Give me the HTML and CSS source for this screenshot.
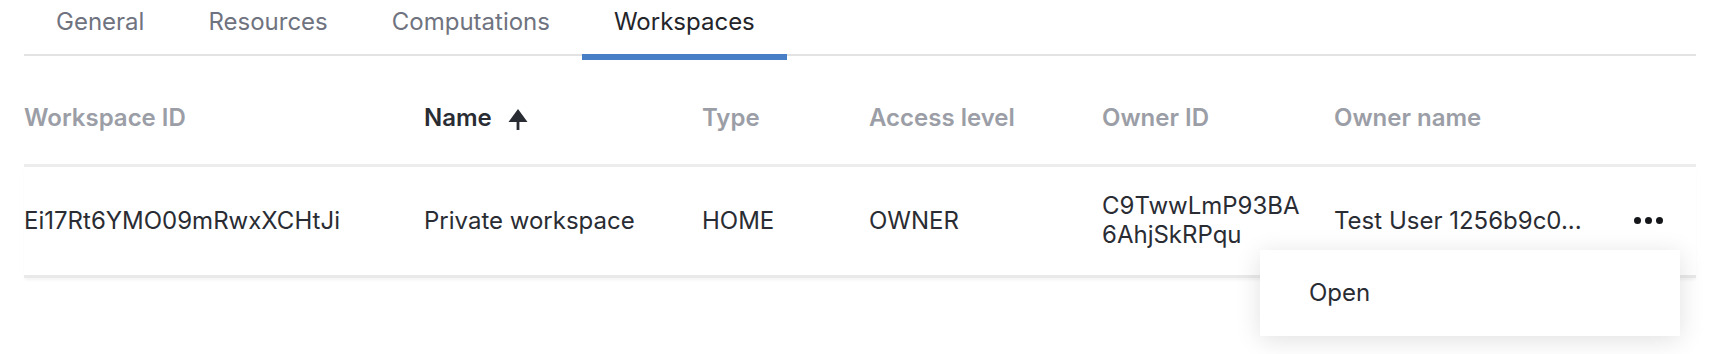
FILE: index.html
```html
<!DOCTYPE html>
<html lang="en">
<head>
    <meta charset="UTF-8">
    <meta name="viewport" content="width=device-width, initial-scale=1.0">
    <link rel="stylesheet" href="styles.css">
</head>
<body>
    <div class="page">
        <nav class="tabs">
            <a href="#" class="tab">General</a>
            <a href="#" class="tab">Resources</a>
            <a href="#" class="tab">Computations</a>
            <a href="#" class="tab active">Workspaces</a>
        </nav>

        <div class="grid">
            <div class="row head">
                <div class="cell">Workspace ID</div>
                <div class="cell sorted">Name
                    <svg class="sort-icon" viewBox="0 0 20 21" width="20" height="21">
                        <path d="M10 0 L19.5 13 L11.4 13 L11.4 21 L8.6 21 L8.6 13 L0.5 13 Z" fill="currentColor"/>
                    </svg>
                </div>
                <div class="cell">Type</div>
                <div class="cell">Access level</div>
                <div class="cell">Owner ID</div>
                <div class="cell">Owner name</div>
                <div class="cell"></div>
            </div>
            <div class="row body">
                <div class="cell">Ei17Rt6YMO09mRwxXCHtJi</div>
                <div class="cell">Private workspace</div>
                <div class="cell">HOME</div>
                <div class="cell">OWNER</div>
                <div class="cell wrap">C9TwwLmP93BA6AhjSkRPqu</div>
                <div class="cell">Test User 1256b9c0...</div>
                <div class="cell actions">
                    <button class="dots"><span></span><span></span><span></span></button>
                    <div class="menu">
                        <a href="#" class="menu-item">Open</a>
                    </div>
                </div>
            </div>
        </div>
    </div>
</body>
</html>
```

FILE: styles.css
```css
html, body {
    height: 100%;
}

body {
    margin: 0;
    min-height: 100vh;
    background: #ffffff;
    font-family: Inter, "Noto Sans", sans-serif;
    color: #2a2c33;
}

.page {
    min-height: 100%;
    padding: 0 38px 0 24px;
}

/* tabs */
.tabs {
    display: flex;
    align-items: flex-start;
    border-bottom: 2px solid #e3e3e3;
}

.tab {
    display: block;
    height: 47px;
    padding: 7px 32px 0;
    font-size: 24px;
    line-height: 30px;
    color: #6f7380;
    text-decoration: none;
}

.tab.active {
    color: #23252b;
    border-bottom: 6px solid #477ec6;
    margin-bottom: -6px;
}

/* table */
.row {
    display: grid;
    grid-template-columns: 400px 278px 167px 233px 232px 266px 1fr;
}

.cell {
    font-size: 24px;
    line-height: 29px;
}

.head .cell {
    padding: 47px 0 32px;
    font-weight: 600;
    color: #9b9ea6;
}

.head .sorted {
    display: flex;
    align-items: center;
    gap: 16px;
    color: #2a2c33;
}

.sort-icon {
    margin-top: 3px;
}

.body {
    border-top: 3px solid #ececec;
    border-bottom: 3px solid #e9e9e9;
    box-shadow: 0 3px 3px -1px rgba(0, 0, 0, 0.05);
    height: 108px;
    align-items: center;
}

.body .cell {
    padding-bottom: 2px;
}

.wrap {
    padding-right: 28px;
    word-break: break-all;
}

.actions {
    position: relative;
    align-self: stretch;
    display: flex;
    align-items: center;
    justify-content: center;
}

.dots {
    display: flex;
    gap: 4px;
    padding: 0;
    border: 0;
    background: none;
    cursor: pointer;
}

.dots span {
    width: 7px;
    height: 7px;
    border-radius: 50%;
    background: #15161a;
}

.menu {
    position: absolute;
    top: 83px;
    right: 16px;
    width: 420px;
    background: #ffffff;
    box-shadow: 0 4px 24px rgba(0, 0, 0, 0.12);
    z-index: 5;
}

.menu-item {
    display: block;
    padding: 28px 49px;
    font-size: 24px;
    line-height: 30px;
    color: #2a2c33;
    text-decoration: none;
}
```
